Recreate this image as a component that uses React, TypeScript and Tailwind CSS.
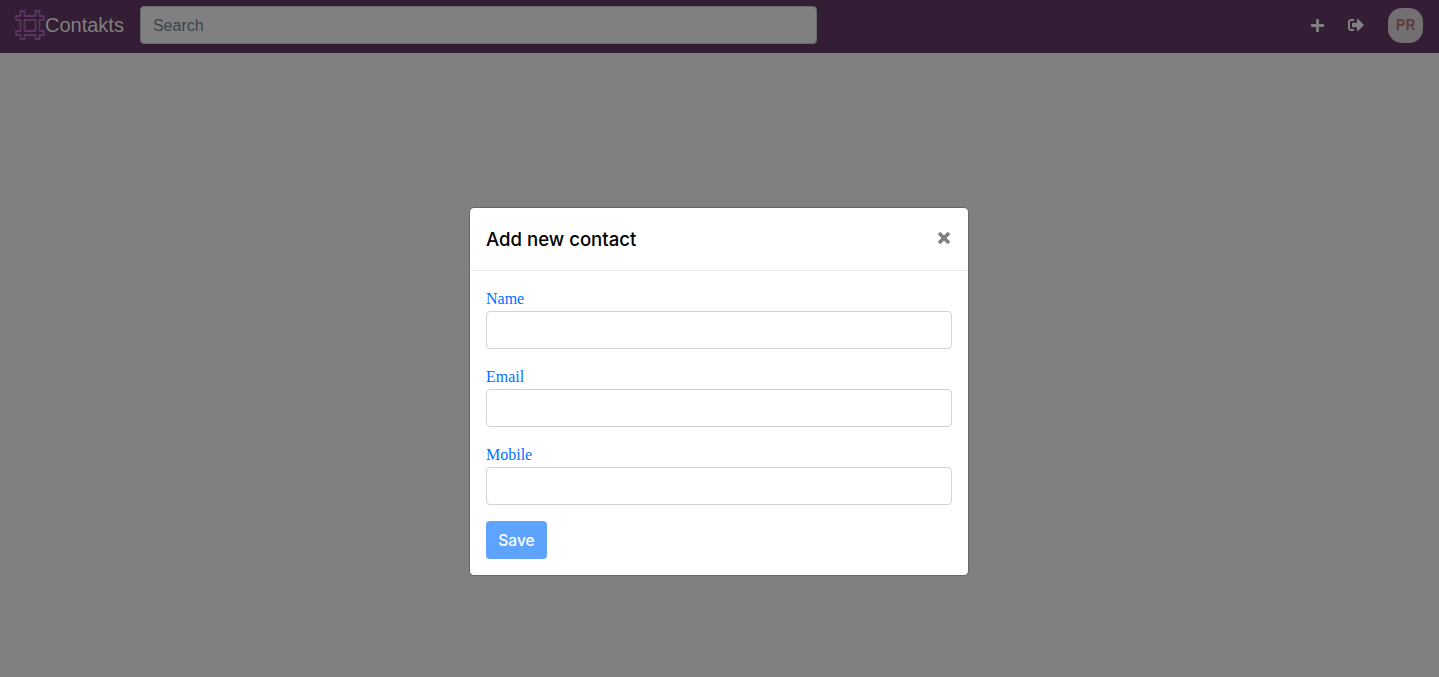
import React from "react";
import { FaPlus, FaSignOutAlt } from "react-icons/fa";

function Logo() {
  return (
    <svg width="30" height="30" viewBox="0 0 30 30" fill="none" stroke="#59355f" strokeWidth="1.8" strokeLinejoin="round">
      <path d="M5.5 1h4v5h11V1h4v5H29v4h-4.5v11H29v4h-4.5v4h-4v-4h-11v4h-4v-4H1v-4h4.5V10H1V6h4.5z" />
      <path d="M9.5 10h11v11h-11z" />
    </svg>
  );
}

function CloseIcon() {
  return (
    <svg width="14" height="14" viewBox="0 0 14 14" stroke="#7f7f7f" strokeWidth="3.6" className="mb-[2px] mr-px">
      <path d="M2 2l10 10M12 2L2 12" />
    </svg>
  );
}

function Field({ label }: { label: string }) {
  return (
    <div className="mb-4 flex flex-col">
      <label className="mb-[1px] h-[23px] font-['Liberation_Serif',serif] text-base leading-6 text-[#006fff]">{label}</label>
      <input className="h-[38px] w-full rounded border border-[#ced4da] bg-white px-3" />
    </div>
  );
}

export default function App() {
  return (
    <div className="relative h-[677px] overflow-hidden bg-[#808080] font-['Liberation_Sans',sans-serif]">
      <nav className="flex h-[53px] items-center bg-[#331e36] pb-[3px] pl-[15px] pr-4">
        <Logo />
        <span className="text-xl leading-none text-[#808080]">Contakts</span>
        <input
          placeholder="Search"
          className="ml-4 h-[38px] w-[677px] rounded border border-[#6a6a6a] bg-[#808080] px-3 pt-[2px] text-base text-[#3a444c] placeholder:text-[#3a444c]"
        />
        <div className="ml-auto flex items-center text-[#808080]">
          <FaPlus className="text-[15px]" />
          <FaSignOutAlt className="ml-[23px] text-[16px]" />
          <div className="ml-[24px] mt-px flex h-[35px] w-[35px] items-center justify-center rounded-[14px] bg-[#736e70] font-['Inter',sans-serif] text-[15px] font-semibold text-[#5a3b41]">PR</div>
        </div>
      </nav>
      <div className="fixed inset-0 flex items-start justify-center pr-px pt-[207px]">
        <div className="w-[500px] rounded-[5px] border border-[#666] bg-white">
          <div className="flex h-[63px] items-center justify-between border-b border-[#e9ecef] px-4">
            <h5 className="font-['Inter',sans-serif] text-[18.6px] font-medium leading-none text-black">Add new contact</h5>
            <CloseIcon />
          </div>
          <form className="p-4">
            <Field label="Name" />
            <Field label="Email" />
            <Field label="Mobile" />
            <button type="button" className="h-[38px] w-[61px] rounded bg-[#5ea4ff] pt-[2px] font-['Inter',sans-serif] text-[15.5px] font-medium text-white">Save</button>
          </form>
        </div>
      </div>
    </div>
  );
}
